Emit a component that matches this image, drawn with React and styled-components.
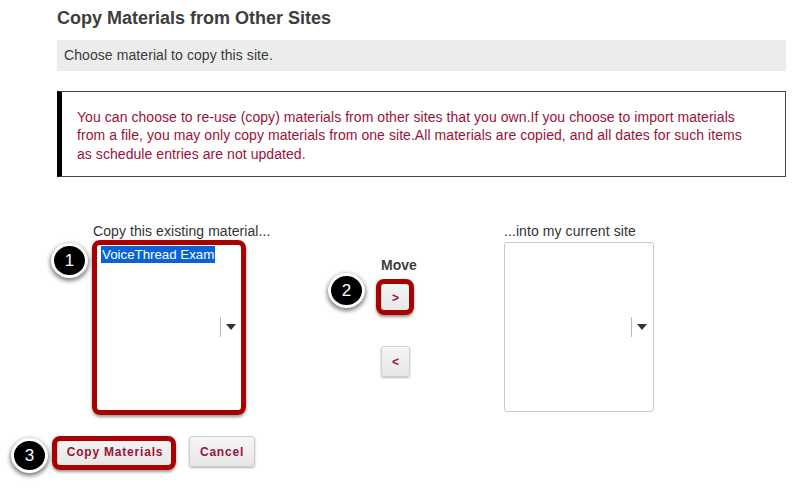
import React from 'react';
import styled, { createGlobalStyle, css } from 'styled-components';

const Global = createGlobalStyle`
    html, body {
        margin: 0;
        background: #fff;
    }
    body {
        font-family: "Liberation Sans", Arial, sans-serif;
        font-size: 14px;
        letter-spacing: 0.08px;
        color: #333;
    }
`;

const ring = css`
    ${({ $marked }) => $marked && css`
        &:after {
            content: "";
            position: absolute;
            top: ${({ $ringOffset }) => $ringOffset[0]}px;
            right: ${({ $ringOffset }) => $ringOffset[1]}px;
            bottom: ${({ $ringOffset }) => $ringOffset[2]}px;
            left: ${({ $ringOffset }) => $ringOffset[3]}px;
            border: 5px solid #a90000;
            border-radius: 8px;
            box-shadow: 0 2px 3px rgba(0, 0, 0, 0.4);
            pointer-events: none;
        }
    `}
`;

const Page = styled.div`
    width: 729px;
    height: 504px;
    padding: 0 15px 0 57px;
    overflow: hidden;
`;

const Title = styled.h3`
    margin: 0;
    padding-top: 8px;
    font-size: 18px;
    line-height: 21px;
    letter-spacing: 0;
    font-weight: bold;
    color: #3d3d3d;
`;

const Instruction = styled.div`
    margin-top: 11px;
    height: 31px;
    padding-left: 7px;
    line-height: 31px;
    background: #ececec;
    color: #3a3a3a;
`;

const Alert = styled.div`
    box-sizing: border-box;
    margin-top: 20px;
    height: 86px;
    padding: 16px 40px 0 15px;
    border: 1px solid #444;
    border-left: 5px solid #000;
    line-height: 18.4px;
    letter-spacing: 0.06px;
    color: #9b1237;
`;

const Transfer = styled.div`
    display: flex;
    align-items: flex-start;
    margin-top: 45px;
    padding-left: 36px;
`;

const Column = styled.div`
    width: 150px;
`;

const ColumnLabel = styled.div`
    height: 20px;
    line-height: 18px;
    white-space: nowrap;
`;

const MoveColumn = styled.div`
    display: flex;
    flex-direction: column;
    align-items: flex-start;
    width: 36px;
    margin: 34px 87px 0 138px;
`;

const MoveLabel = styled.div`
    font-weight: bold;
    line-height: 18px;
    letter-spacing: 0;
    color: #3d3d3d;
`;

const ListBox = styled.div`
    position: relative;
    box-sizing: border-box;
    height: 170px;
    padding: 3px 3px;
    background: #fff;
    border: 1px solid #c8c8c8;
    border-radius: 3px;
    ${ring}
`;

const Option = styled.div`
    width: fit-content;
    margin-left: 4px;
    padding: 0 1px;
    font-size: 13.3px;
    line-height: 17px;
    letter-spacing: 0;
    color: #fff;
    background: #0b62d6;
`;

const Caret = styled.div`
    position: absolute;
    top: 74px;
    right: ${({ $right }) => $right}px;
    display: flex;
    align-items: center;
    height: 20px;
    padding-left: 5px;
    border-left: 1px solid #bbb;
    &:after {
        content: "";
        border-style: solid;
        border-width: 6px 5px 0 5px;
        border-color: #333 transparent transparent transparent;
    }
`;

const Button = styled.div`
    position: relative;
    box-sizing: border-box;
    display: flex;
    align-items: center;
    justify-content: center;
    height: 31px;
    width: ${({ $w }) => $w}px;
    font-size: 12px;
    font-weight: bold;
    letter-spacing: ${({ $small }) => ($small ? '0' : '0.8px')};
    color: #9b1237;
    background: linear-gradient(#f6f6f6, #e6e6e6);
    border: 1px solid #d0d0d0;
    border-radius: 3px;
    box-shadow: 0 1px 2px rgba(0, 0, 0, 0.3);
    ${ring}
`;

const ForwardButton = styled(Button)`
    margin-top: 8px;
`;

const BackButton = styled(Button)`
    margin-top: 33px;
`;

const Actions = styled.div`
    display: flex;
    gap: 16px;
    margin-top: 24px;
`;

const Step = styled.div`
    position: absolute;
    top: ${({ $y }) => $y}px;
    left: ${({ $x }) => $x}px;
    box-sizing: border-box;
    width: 37px;
    height: 35px;
    display: flex;
    align-items: center;
    justify-content: center;
    border: 3px solid #fff;
    border-radius: 50%;
    background: #000;
    color: #fff;
    font-size: 17px;
    box-shadow: 0 2px 4px 1px rgba(0, 0, 0, 0.5);
`;

export default function App() {
    return (
        <Page>
            <Global />
            <Title>Copy Materials from Other Sites</Title>
            <Instruction>Choose material to copy this site.</Instruction>
            <Alert>
                You can choose to re-use (copy) materials from other sites that you own.If you choose to import materials
                from a file, you may only copy materials from one site.All materials are copied, and all dates for such items
                as schedule entries are not updated.
            </Alert>
            <Transfer>
                <Column>
                    <ColumnLabel>Copy this existing material...</ColumnLabel>
                    <ListBox $marked $ringOffset={[-3, -4, -4, -2]}>
                        <Option>VoiceThread Exam</Option>
                        <Caret $right={6} />
                    </ListBox>
                </Column>
                <MoveColumn>
                    <MoveLabel>Move</MoveLabel>
                    <ForwardButton $small $w={29} $marked $ringOffset={[-4, -5, -3, -6]}>&gt;</ForwardButton>
                    <BackButton $small $w={29}>&lt;</BackButton>
                </MoveColumn>
                <Column>
                    <ColumnLabel>...into my current site</ColumnLabel>
                    <ListBox>
                        <Caret $right={6} />
                    </ListBox>
                </Column>
            </Transfer>
            <Actions>
                <Button $w={116} $marked $ringOffset={[-1, -4, -4, -6]}>Copy Materials</Button>
                <Button $w={66}>Cancel</Button>
            </Actions>
            <Step $x={51} $y={243}>1</Step>
            <Step $x={328} $y={273}>2</Step>
            <Step $x={11} $y={438}>3</Step>
        </Page>
    );
}
